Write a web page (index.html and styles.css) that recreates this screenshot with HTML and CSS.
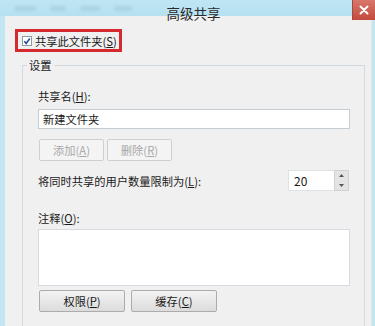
FILE: index.html
```html
<!DOCTYPE html>
<html lang="zh-CN">
<head>
<meta charset="utf-8">
<title>高级共享</title>
<link rel="stylesheet" href="styles.css">
</head>
<body>
<div class="window">
  <div class="titlebar">
    <div class="title-blur">
      <span class="blur b1"></span><span class="blur b2"></span><span class="blur b3"></span><span class="blur b4"></span>
    </div>
    <div class="title">高级共享</div>
    <div class="close">
      <svg width="10" height="10" viewBox="0 0 10 10"><path d="M1.5 1.5 L8.5 8.5 M8.5 1.5 L1.5 8.5" stroke="#fff" stroke-width="2" stroke-linecap="round"/></svg>
    </div>
  </div>
  <div class="body">
    <div class="content">
      <div class="share-check">
        <span class="checkbox">
          <svg width="10" height="10" viewBox="0 0 10 10"><rect x="0.5" y="0.5" width="9" height="9" fill="#fff" stroke="#8e9aa6"/><path d="M2.3 5.3 L4.2 7.4 L7.8 2.5" fill="none" stroke="#2b4f96" stroke-width="1.6"/></svg>
        </span>
        <span class="check-label">共享此文件夹(<u>S</u>)</span>
      </div>
      <div class="group">
        <div class="legend">设置</div>
        <div class="group-inner">
          <div class="label">共享名(<u>H</u>):</div>
          <div class="input">新建文件夹</div>
          <div class="btn-row">
            <span class="btn disabled small">添加(<u>A</u>)</span>
            <span class="btn disabled small">删除(<u>R</u>)</span>
          </div>
          <div class="limit-row">
            <span class="label">将同时共享的用户数量限制为(<u>L</u>):</span>
            <span class="spin">
              <span class="spin-input">20</span>
              <span class="spin-btns">
                <span class="spin-btn"><svg width="5" height="3" viewBox="0 0 5 3"><path d="M0 3 L2.5 0 L5 3Z" fill="#555"/></svg></span>
                <span class="spin-btn"><svg width="5" height="3" viewBox="0 0 5 3"><path d="M0 0 L2.5 3 L5 0Z" fill="#555"/></svg></span>
              </span>
            </span>
          </div>
          <div class="label comment-label">注释(<u>O</u>):</div>
          <div class="textarea"></div>
          <div class="btn-row bottom">
            <span class="btn big">权限(<u>P</u>)</span>
            <span class="btn big">缓存(<u>C</u>)</span>
          </div>
        </div>
      </div>
    </div>
  </div>
</div>
</body>
</html>
```
FILE: styles.css
```css
html, body {
  margin: 0;
  padding: 0;
  width: 375px;
  height: 326px;
  overflow: hidden;
  font-family: "Noto Sans CJK SC", "Noto Sans", sans-serif;
  font-size: 11.25px;
  color: #1a1a1a;
}
u { text-decoration: underline; text-underline-offset: 1px; }
.window {
  width: 375px;
  height: 326px;
  background: #c3e6f3;
  display: flex;
  flex-direction: column;
}
.titlebar {
  height: 27px;
  display: flex;
  align-items: center;
  position: relative;
  background: linear-gradient(#bfe5f4, #b6e0f0);
}
.title-blur {
  display: flex;
  gap: 14px;
  padding-left: 14px;
  opacity: 0.35;
}
.blur {
  display: inline-block;
  height: 5px;
  background: #8fb6c6;
  border-radius: 3px;
  filter: blur(1.5px);
}
.b1 { width: 22px; }
.b2 { width: 16px; }
.b3 { width: 20px; }
.b4 { width: 18px; }
.title {
  position: absolute;
  left: 0;
  right: 0;
  top: 0;
  text-align: center;
  line-height: 27px;
  font-size: 13.5px;
  color: #2a2a2a;
  padding-left: 12px;
}
.close {
  position: absolute;
  right: -8px;
  top: 0;
  width: 31px;
  height: 20px;
  background: linear-gradient(#d9776c, #c24a3d);
  display: flex;
  align-items: center;
  justify-content: center;
  border-left: 1px solid #a5473d;
  padding-right: 8px;
  box-sizing: border-box;
}
.body {
  flex: 1;
  display: flex;
  padding: 0 5px 0 5px;
}
.content {
  flex: 1;
  background: #f0f0f0;
  padding: 13px 6px 0 10px;
  border-right: 1px solid #e2e6e8;
}
.share-check {
  display: inline-flex;
  align-items: center;
  height: 17px;
  border: 3px solid #d42a2f;
  padding: 0 2px 0 4px;
  gap: 3px;
}
.checkbox { display: inline-flex; }
.check-label { white-space: nowrap; line-height: 16px; }
.group {
  margin-top: 13px;
  margin-left: 7px;
  border: 1px solid #d3dbe0;
  border-bottom: none;
  width: 341px;
  height: 260px;
}
.legend {
  display: inline-block;
  margin-top: -9px;
  margin-left: 4px;
  padding: 0 2px;
  background: #f0f0f0;
  line-height: 16px;
  vertical-align: top;
}
.group-inner {
  padding: 6px 14px 0 15px;
  display: flex;
  flex-direction: column;
}
.label { line-height: 16px; white-space: nowrap; }
.input {
  margin-top: 5px;
  height: 18px;
  border: 1px solid #c5cdd3;
  background: #fff;
  line-height: 18px;
  padding-left: 4px;
}
.btn-row {
  display: flex;
  gap: 3px;
  margin-top: 10px;
  margin-left: 1px;
}
.btn {
  display: inline-flex;
  align-items: center;
  justify-content: center;
  box-sizing: border-box;
  border: 1px solid #acacac;
  border-radius: 2px;
  background: linear-gradient(#f3f3f3, #dcdcdc);
  color: #1a1a1a;
}
.btn.small { width: 65px; height: 22px; }
.btn.disabled {
  border-color: #cfcfcf;
  background: #f4f4f4;
  color: #a8a8a8;
}
.btn-row.bottom { margin-top: 4px; gap: 6px; }
.btn.big { width: 86px; height: 22px; }
.limit-row {
  margin-top: 9px;
  height: 21px;
  display: flex;
  align-items: center;
  justify-content: space-between;
}
.spin {
  display: flex;
  height: 21px;
  margin-right: 1px;
}
.spin-input {
  width: 40px;
  height: 19px;
  border: 1px solid #dde2e6;
  border-right: none;
  background: #fff;
  line-height: 19px;
  padding-left: 5px;
  font-size: 12px;
}
.spin-btns {
  width: 13px;
  display: flex;
  flex-direction: column;
  border: 1px solid #cfd3d6;
  background: #e4e4e4;
}
.spin-btn {
  flex: 1;
  display: flex;
  align-items: center;
  justify-content: center;
}
.comment-label { margin-top: 19px; }
.textarea {
  margin-top: 3px;
  height: 55px;
  border: 1px solid #d5dbe0;
  background: #fff;
}
```
